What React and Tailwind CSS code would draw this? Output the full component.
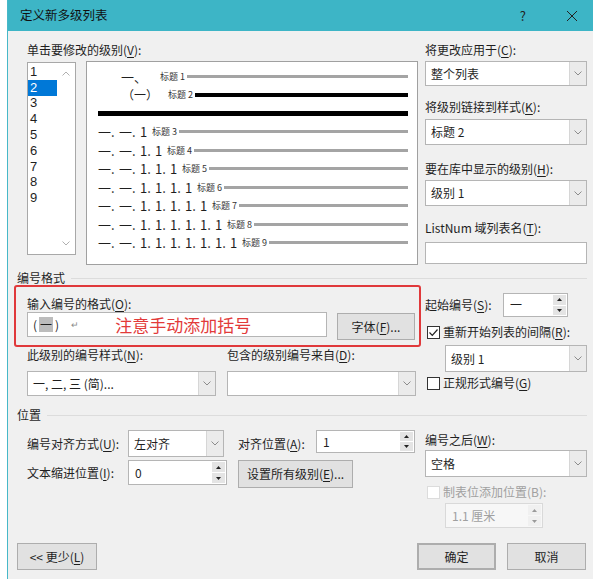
const font = "font-['Noto_Sans_CJK_SC','Microsoft_YaHei',sans-serif]";

function U({ children }) {
  return <span className="underline underline-offset-[2px]">{children}</span>;
}

function Chevron({ up = false, color = '#8c8c8c' }) {
  return (
    <svg width="8" height="5" viewBox="0 0 8 5">
      <path d={up ? 'M0.5 4.5L4 1L7.5 4.5' : 'M0.5 0.5L4 4L7.5 0.5'} stroke={color} fill="none" strokeWidth="1" />
    </svg>
  );
}

function Tri({ up = false, color = '#222' }) {
  return (
    <svg width="5" height="3" viewBox="0 0 5 3">
      <path d={up ? 'M0 3L2.5 0L5 3Z' : 'M0 0L2.5 3L5 0Z'} fill={color} />
    </svg>
  );
}

function Combo({ className = '', children }) {
  return (
    <div className={`flex bg-white border border-[#b5b5b5] ${className}`}>
      <div className="flex-1 flex items-center pl-[5px] whitespace-nowrap overflow-hidden">{children}</div>
      <div className="w-[17px] border-l border-[#d6d6d6] bg-[#ebebeb] flex items-center justify-center">
        <Chevron />
      </div>
    </div>
  );
}

function Spinner({ className = '', children, disabled = false }) {
  const box = disabled ? 'border-[#d9d9d9] bg-[#f7f7f7] text-[#a0a0a0]' : 'border-[#b5b5b5] bg-white';
  const cell = disabled ? 'bg-[#f0f0f0]' : 'bg-[#e4e4e4]';
  const c = disabled ? '#9a9a9a' : '#222';
  return (
    <div className={`flex border ${box} ${className}`}>
      <div className="flex-1 flex items-center pl-[6px] whitespace-nowrap">{children}</div>
      <div className="w-[15px] flex flex-col gap-[1px] p-[1px]">
        <div className={`flex-1 ${cell} flex items-center justify-center`}><Tri up color={c} /></div>
        <div className={`flex-1 ${cell} flex items-center justify-center`}><Tri color={c} /></div>
      </div>
    </div>
  );
}

function Button({ className = '', children }) {
  return (
    <div className={`flex items-center justify-center bg-[#e1e1e1] border border-[#adadad] ${className}`}>{children}</div>
  );
}

function Check({ checked = false, disabled = false }) {
  return (
    <div className={`w-[13px] h-[13px] border bg-white flex items-center justify-center ${disabled ? 'border-[#dcdcdc]' : 'border-[#333]'}`}>
      {checked && (
        <svg width="11" height="11" viewBox="0 0 11 11">
          <path d="M1.5 5.5L4.3 8.3L9.5 2.5" stroke="#222" strokeWidth="1.2" fill="none" />
        </svg>
      )}
    </div>
  );
}

function Label({ className = '', children }) {
  return <div className={`h-[16px] flex items-center whitespace-nowrap ${className}`}>{children}</div>;
}

function Section({ title }) {
  return (
    <div className="mt-[6px] h-[14px] ml-[9px] mr-[6px] flex items-center">
      <span>{title}</span>
      <div className="flex-1 h-px bg-[#dcdcdc] ml-[6px]" />
    </div>
  );
}

function NumRow({ depth }) {
  const ones = Array.from({ length: depth - 2 }, (_, i) => i);
  return (
    <div className="h-[18.5px] flex items-center pl-[11px]">
      <span className="w-[21px] text-[13px]">一.</span>
      <span className="w-[21px] text-[13px]">一.</span>
      {ones.map((i) =>
        i < ones.length - 1 ? (
          <span key={i} className="w-[15px] text-[13px]">1.</span>
        ) : (
          <span key={i} className="w-[8px] text-[13px]">1</span>
        )
      )}
      <span className="ml-[4px] text-[9px] text-[#333]">标题 {depth}</span>
      <div className="flex-1 h-[3px] bg-[#a4a4a4] ml-[2px]" />
    </div>
  );
}

export default function App() {
  const levels = [1, 2, 3, 4, 5, 6, 7, 8, 9];
  return (
    <div className={`w-[593px] h-[582px] bg-white ${font} text-[12px] leading-none text-[#1f1f1f]`}>
      <div className="ml-[7px] w-[586px] h-[579px] bg-[#f0f0f0] border-l border-[#47b8c8] flex flex-col">
        {/* Title bar */}
        <div className="h-[31px] bg-[#3db5c6] flex items-center pl-[12px] pr-[15px]">
          <span className="text-[12.5px] text-[#111]">定义新多级列表</span>
          <span className="ml-auto text-[13px] text-[#222]">?</span>
          <svg className="ml-[40px]" width="12" height="12" viewBox="0 0 12 12">
            <path d="M1 1L11 11M11 1L1 11" stroke="#222" strokeWidth="1" />
          </svg>
        </div>

        {/* Levels + preview + right options */}
        <div className="flex mt-[11px] ml-[19px] gap-[7px]">
          <div className="w-[391px]">
            <Label>单击要修改的级别(<U>V</U>):</Label>
            <div className="flex items-start mt-[3px]">
              <div className="mt-[1px] w-[49px] h-[193px] bg-white border border-[#a8a8a8] flex">
                <div className="w-[29px] pt-[1px] font-['Liberation_Sans',sans-serif]">
                  {levels.map((n) => (
                    <div
                      key={n}
                      className={`h-[15.8px] flex items-center pl-[2px] text-[13px] leading-[14px] ${n === 2 ? 'bg-[#0078d7] text-white' : ''}`}
                    >
                      {n}
                    </div>
                  ))}
                </div>
                <div className="flex-1 flex flex-col items-center justify-between py-[8px]">
                  <Chevron up color="#b0b0b0" />
                  <Chevron color="#b0b0b0" />
                </div>
              </div>
              <div className="ml-[10px] w-[332px] h-[204px] bg-white border border-[#a0a0a0] pt-[5px] pr-[9px]">
                <div className="h-[18.5px] flex items-center pl-[34px]">
                  <span className="text-[13px]">一、</span>
                  <span className="ml-[13px] text-[9px] text-[#333]">标题 1</span>
                  <div className="flex-1 h-[3px] bg-[#a4a4a4] ml-[2px]" />
                </div>
                <div className="h-[18.5px] flex items-center pl-[35px]">
                  <span className="text-[12px]">（一）</span>
                  <span className="ml-[10px] text-[9px] text-[#333]">标题 2</span>
                  <div className="flex-1 h-[4px] bg-black ml-[2px]" />
                </div>
                <div className="h-[18.5px] flex items-center pl-[11px]">
                  <div className="flex-1 h-[5px] bg-black" />
                </div>
                {[3, 4, 5, 6, 7, 8, 9].map((d) => (
                  <NumRow key={d} depth={d} />
                ))}
              </div>
            </div>
          </div>

          <div className="w-[162px]">
            <Label>将更改应用于(<U>C</U>):</Label>
            <Combo className="mt-[3px] h-[25px]">整个列表</Combo>
            <Label className="mt-[13px]">将级别链接到样式(<U>K</U>):</Label>
            <Combo className="mt-[4px] h-[26px]">标题 2</Combo>
            <Label className="mt-[16px]">要在库中显示的级别(<U>H</U>):</Label>
            <Combo className="mt-[3px] h-[26px]">级别 1</Combo>
            <Label className="mt-[14px]">ListNum 域列表名(<U>T</U>):</Label>
            <div className="mt-[6px] h-[22px] bg-white border border-[#b5b5b5]" />
          </div>
        </div>

        <Section title="编号格式" />

        {/* Number format */}
        <div className="flex ml-[6px] gap-[4px]">
          <div className="w-[407px]">
            <div className="h-[62px] border-2 border-[#e0393b] rounded-[3px] pl-[11px] pt-[9px]">
              <Label>输入编号的格式(<U>O</U>):</Label>
              <div className="flex items-start">
                <div className="w-[300px] h-[25px] bg-white border border-[#b5b5b5] flex items-center pl-[5px]">
                  <span className="mr-[2px]">(</span>
                  <span className="bg-[#bcbcbc] h-[15px] px-[1px] flex items-center">一</span>
                  <span className="ml-[2px]">)</span>
                  <span className="ml-[12px] text-[9px] text-[#8a8a8a]">↵</span>
                  <span className="ml-[36px] text-[17px] text-[#e23a3a]">注意手动添加括号</span>
                </div>
                <Button className="ml-[10px] mt-[1px] w-[78px] h-[27px]">字体(<U>F</U>)...</Button>
              </div>
            </div>
            <div className="flex h-[16px] items-center ml-[13px]">
              <div className="w-[200px]">此级别的编号样式(<U>N</U>):</div>
              <div>包含的级别编号来自(<U>D</U>):</div>
            </div>
            <div className="flex mt-[8px] ml-[13px] gap-[11px]">
              <Combo className="w-[189px] h-[25px]">一, 二, 三 (简)...</Combo>
              <Combo className="w-[189px] h-[25px]" />
            </div>
          </div>

          <div className="w-[162px]">
            <div className="mt-[8px] h-[24px] flex items-center">
              <div className="w-[78px]">起始编号(<U>S</U>):</div>
              <Spinner className="w-[65px] h-[24px]">一</Spinner>
            </div>
            <div className="mt-[7px] h-[16px] flex items-center">
              <div className="ml-[2px]"><Check checked /></div>
              <span className="ml-[3px]">重新开始列表的间隔(<U>R</U>):</span>
            </div>
            <Combo className="mt-[5px] ml-[20px] w-[142px] h-[27px]">级别 1</Combo>
            <div className="mt-[3px] h-[16px] flex items-center">
              <div className="ml-[2px]"><Check /></div>
              <span className="ml-[3px]">正规形式编号(<U>G</U>)</span>
            </div>
          </div>
        </div>

        <div className="mt-[6px]" />
        <Section title="位置" />

        {/* Position */}
        <div className="flex mt-[8px] ml-[19px] gap-[10px]">
          <div className="w-[388px]">
            <div className="flex items-start">
              <div className="w-[101px] h-[27px] flex items-center">编号对齐方式(<U>U</U>):</div>
              <Combo className="w-[96px] h-[27px]">左对齐</Combo>
              <div className="ml-[14px] w-[78px] h-[27px] flex items-center">对齐位置(<U>A</U>):</div>
              <Spinner className="w-[99px] h-[23px]">1</Spinner>
            </div>
            <div className="flex items-start mt-[3px]">
              <div className="w-[101px] h-[25px] flex items-center">文本缩进位置(<U>I</U>):</div>
              <Spinner className="w-[99px] h-[25px]">0</Spinner>
              <Button className="ml-[11px] w-[115px] h-[28px]">设置所有级别(<U>E</U>)...</Button>
            </div>
          </div>

          <div className="w-[162px]">
            <Label className="mt-[2px]">编号之后(<U>W</U>):</Label>
            <Combo className="mt-[2px] h-[27px]">空格</Combo>
            <div className="mt-[7px] h-[16px] flex items-center">
              <div className="ml-[2px]"><Check disabled /></div>
              <span className="ml-[3px] text-[#a0a0a0]">制表位添加位置(B):</span>
            </div>
            <Spinner disabled className="mt-[3px] ml-[20px] w-[98px] h-[25px]">1.1 厘米</Spinner>
          </div>
        </div>

        {/* Bottom buttons */}
        <div className="flex mt-[15px] ml-[9px] mr-[7px]">
          <Button className="w-[80px] h-[27px]">&lt;&lt; 更少(<U>L</U>)</Button>
          <Button className="ml-auto w-[79px] h-[27px] border-2 border-[#0078d7]">确定</Button>
          <Button className="ml-[11px] w-[79px] h-[27px]">取消</Button>
        </div>
      </div>
    </div>
  );
}
